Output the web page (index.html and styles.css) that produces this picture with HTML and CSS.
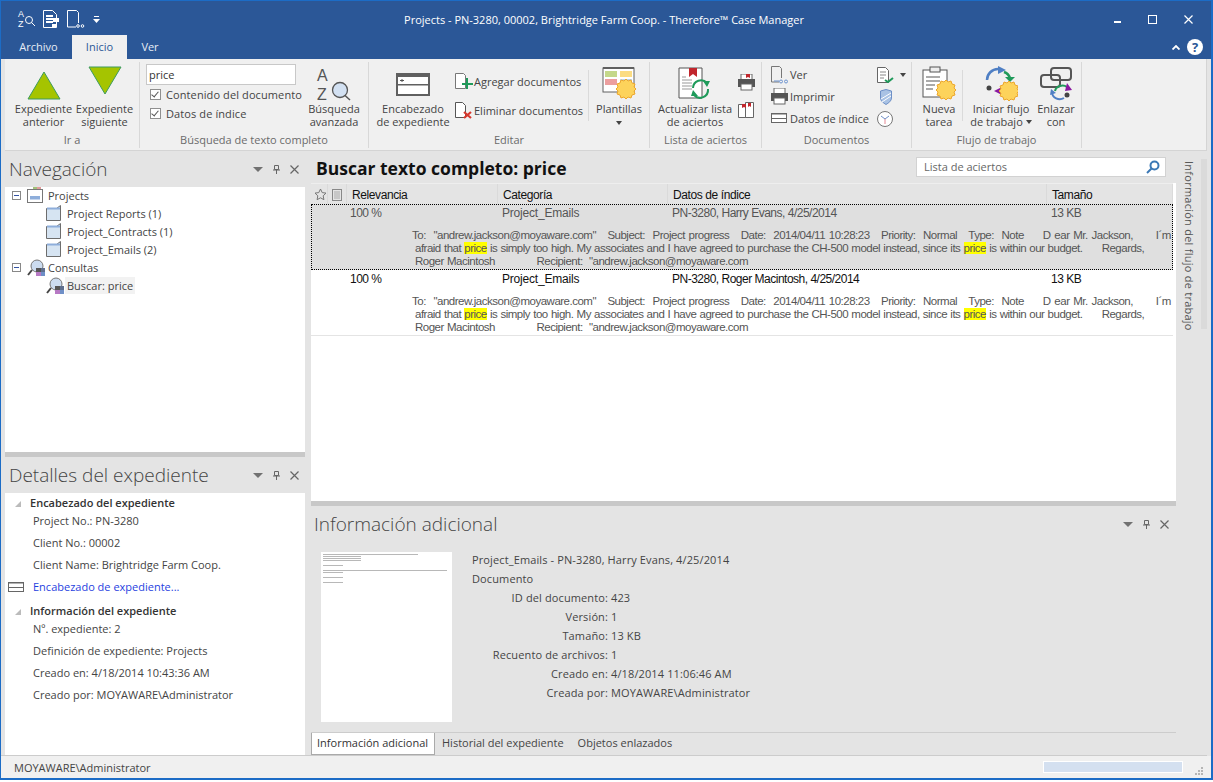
FILE: index.html
```html
<!DOCTYPE html>
<html lang="es">
<head>
    <meta charset="UTF-8">
    <title>Projects - Therefore Case Manager</title>
    <link rel="stylesheet" href="styles.css">
</head>
<body>
<svg class="defs" width="0" height="0">
    <defs>
        <g id="sun">
            <path d="M10 0l2 2 3-1 1 3 3 1-1 3 2 2-2 2 1 3-3 1-1 3-3-1-2 2-2-2-3 1-1-3-3-1 1-3-2-2 2-2-1-3 3-1 1-3 3 1z" fill="#fdd35b" stroke="#eda72c"/>
        </g>
        <g id="folder">
            <path d="M.5 15.500v-12h10l4-3v15z" fill="#d6e4f2" stroke="#6d6d6d"/>
            <path d="M1 3.500h13" stroke="#8eaedb" stroke-width="2"/>
        </g>
        <g id="query">
            <circle cx="10" cy="7" r="6" fill="#ccdcf0" stroke="#777"/>
            <path d="M5 11l-4 5" stroke="#444" stroke-width="2"/>
            <rect x="9" y="9" width="5" height="4" fill="#555"/>
            <rect x="9" y="13" width="5" height="4" fill="#b779c4"/>
            <rect x="14" y="9" width="4" height="4" fill="#5f6f8e"/>
            <rect x="14" y="13" width="4" height="4" fill="#6f8fc7"/>
        </g>
        <g id="pane">
            <path d="M0 0h10l-5 5z" fill="#717171"/>
        </g>
    </defs>
</svg>
<div class="window">
    <header class="titlebar">
        <div class="quick">
            <div class="az az-small"><span>A</span><span>Z</span><svg width="18" height="20" viewBox="0 0 18 20" fill="none" stroke="#fff"><circle cx="11" cy="11" r="3.500"/><path d="M13.500 13.500l3.500 3.500"/></svg></div>
            <svg width="17" height="18" viewBox="0 0 17 18"><path d="M.5.500h9l4 4v13H.5z" fill="none" stroke="#fff"/><path d="M3 6h7M3 9h7M3 12h7" stroke="#fff" stroke-width="2"/><path d="M10 8h6v4h-6zM9 14h5v3H9z" fill="#fff"/></svg>
            <svg width="18" height="18" viewBox="0 0 18 18" fill="none" stroke="#fff"><path d="M9 17H.5V.5h9l2 2V13"/><circle cx="11" cy="16" r="1.300"/><circle cx="15.500" cy="16" r="1.300"/></svg>
            <svg class="quick-more" width="7" height="7" viewBox="0 0 7 7"><path d="M1 0h5v1H1zM0 3h7L3.500 7z" fill="#fff"/></svg>
        </div>
        <div class="title">Projects - PN-3280, 00002, Brightridge Farm Coop. - Therefore™ Case Manager</div>
        <div class="winbtns">
            <svg width="7" height="3" viewBox="0 0 7 3" class="win-min"><rect width="7" height="2" y="1" fill="#fff"/></svg>
            <svg width="9" height="9" viewBox="0 0 9 9"><rect x=".5" y=".5" width="8" height="8" fill="none" stroke="#fff"/></svg>
            <svg width="9" height="9" viewBox="0 0 9 9"><path d="M.5.500l8 8M8.500.500l-8 8" stroke="#fff" stroke-width="1.200"/></svg>
        </div>
    </header>

    <nav class="tabs">
        <a class="tab">Archivo</a>
        <a class="tab active">Inicio</a>
        <a class="tab">Ver</a>
        <div class="tabs-end">
            <svg width="8" height="5" viewBox="0 0 8 5"><path d="M.5 4.500L4 1l3.500 3.500" fill="none" stroke="#fff" stroke-width="1.800"/></svg>
            <span class="help">?</span>
        </div>
    </nav>

    <section class="ribbon">
        <div class="group g-ira">
            <div class="group-body">
                <div class="big w61">
                    <svg class="ico" width="34" height="35" viewBox="0 0 34 35"><path d="M17 6l16 27H1z" fill="#a5c400" stroke="#3d9b5e"/></svg>
                    <span>Expediente<br>anterior</span>
                </div>
                <div class="big w61">
                    <svg class="ico" width="34" height="35" viewBox="0 0 34 35"><path d="M1 1h32L17 28z" fill="#a5c400" stroke="#3d9b5e"/></svg>
                    <span>Expediente<br>siguiente</span>
                </div>
            </div>
            <div class="group-label">Ir a</div>
        </div>

        <div class="group g-search">
            <div class="group-body">
                <div class="search-col">
                    <div class="search-input">price</div>
                    <div class="check"><span class="box"></span>Contenido del documento</div>
                    <div class="check"><span class="box"></span>Datos de índice</div>
                </div>
                <div class="big w60">
                    <div class="ico az az-big"><span>A</span><span>Z</span><svg width="34" height="35" viewBox="0 0 34 35"><circle cx="23" cy="24" r="7.500" fill="#d3e1f2" stroke="#555" stroke-width="1.300"/><path d="M28 29.500l5 4.500" stroke="#555" stroke-width="1.500"/></svg></div>
                    <span>Búsqueda<br>avanzada</span>
                </div>
            </div>
            <div class="group-label">Búsqueda de texto completo</div>
        </div>

        <div class="group g-edit">
            <div class="group-body">
                <div class="big w80">
                    <svg class="ico" width="34" height="35" viewBox="0 0 34 35"><rect x="1" y="8" width="32" height="21" fill="#fff" stroke="#606060" stroke-width="2"/><path d="M0 7h34v4H0zM0 18h34v1.500H0z" fill="#606060"/><path d="M4 14.500h4M6 13v3" stroke="#555"/></svg>
                    <span>Encabezado<br>de expediente</span>
                </div>
                <div class="stack w130">
                    <div class="small"><svg width="18" height="17" viewBox="0 0 18 17"><path d="M.5.500h8l2 2v13H.5z" fill="#fff" stroke="#777"/><path d="M12 5v11M7 11h11" stroke="#1f9a5a" stroke-width="2"/></svg>Agregar documentos</div>
                    <div class="small"><svg width="18" height="17" viewBox="0 0 18 17"><path d="M.5.500h7l3 3v12H.5z" fill="#fff" stroke="#555"/><path d="M9 10l7 6M16 10l-7 6" stroke="#d8382e" stroke-width="2.200"/></svg>Eliminar documentos</div>
                </div>
                <div class="split s-plant"></div>
                <div class="big w56">
                    <svg class="ico" width="34" height="35" viewBox="0 -1 34 35"><rect x="1" y="1" width="31" height="24" fill="#fff" stroke="#606060"/><path d="M1 1h31" stroke="#606060" stroke-width="2"/><rect x="3" y="4" width="12" height="6" fill="#c5d88a"/><rect x="18" y="4" width="12" height="6" fill="#fbdc83"/><rect x="3" y="12" width="12" height="6" fill="#ec9f9f"/><rect x="18" y="12" width="12" height="6" fill="#bcd3ea"/><use href="#sun" x="14" y="12"/></svg>
                    <span>Plantillas</span>
                    <i class="caret"></i>
                </div>
            </div>
            <div class="group-label">Editar</div>
        </div>

        <div class="group g-list">
            <div class="group-body">
                <div class="big w80">
                    <svg class="ico" width="34" height="35" viewBox="0 -1 34 35"><path d="M1 1h23v30H1z" fill="#fff" stroke="#555"/><path d="M11 1h8v9l-4-3-4 3z" fill="#c1272d"/><path d="M4 10h4M4 13h10M4 16h10M4 19h10M4 22h10" stroke="#999"/><path d="M15 21a8 8 0 0 1 14-5M30 22a8 8 0 0 1-14 6" fill="none" stroke="#1e9a5a" stroke-width="2"/><path d="M25 14h7l-3 6zM20 29h-7l2-6z" fill="#1e9a5a"/></svg>
                    <span>Actualizar lista<br>de aciertos</span>
                </div>
                <div class="stack tools">
                    <svg width="17" height="17" viewBox="0 0 17 17"><rect x="3" y="0" width="11" height="6" fill="#fff" stroke="#666"/><path d="M8 0h4v4l-2-1-2 1z" fill="#c1272d"/><rect x="0" y="5" width="17" height="8" fill="#555"/><rect x="3" y="10" width="11" height="6" fill="#fff" stroke="#666"/></svg>
                    <svg width="17" height="17" viewBox="0 0 17 17"><path d="M.5 2.500h8v13h-8z" fill="#fff" stroke="#666"/><path d="M7.500.500h8v15h-8z" fill="#fff" stroke="#666"/><path d="M4 2h4v4l-2-1-2 1zM10 1h3v4l-1.500-1L10 5z" fill="#c1272d"/></svg>
                </div>
            </div>
            <div class="group-label">Lista de aciertos</div>
        </div>

        <div class="group g-docs">
            <div class="group-body">
                <div class="stack w106">
                    <div class="mini"><svg width="17" height="18" viewBox="0 0 17 18" fill="none"><path d="M8 16H.5V.5h8l2 2V12" stroke="#777"/><circle cx="10" cy="15.500" r="1.500" stroke="#6d93cf"/><circle cx="15" cy="15.500" r="1.500" stroke="#6d93cf"/><path d="M3 15h5" stroke="#6d93cf"/></svg>Ver</div>
                    <div class="mini"><svg width="17" height="17" viewBox="0 0 17 17"><rect x="3" y="0" width="11" height="6" fill="#fff" stroke="#666"/><rect x="0" y="5" width="17" height="8" fill="#555"/><rect x="3" y="10" width="11" height="6" fill="#fff" stroke="#666"/></svg>Imprimir</div>
                    <div class="mini"><svg width="17" height="11" viewBox="0 0 17 11"><rect x=".5" y=".5" width="15" height="9" fill="#fff" stroke="#666"/><path d="M0 1h16M0 5.500h16" stroke="#666"/></svg>Datos de índice</div>
                </div>
                <div class="stack tools2">
                    <div class="t-row"><svg width="18" height="16" viewBox="0 0 18 16"><path d="M.5.500h8l3 3v12H.5z" fill="#fff" stroke="#666"/><path d="M3 5h6M3 8h6M3 11h4" stroke="#888"/><path d="M8 13l3 2 5-4" fill="none" stroke="#1f9a5a" stroke-width="2"/></svg><i class="caret"></i></div>
                    <svg class="shield" width="12" height="16" viewBox="0 0 12 16"><path d="M.5 2L6 .5 11.500 2v7c0 3-3 5-5.500 6.500C3.500 14 .5 12 .5 9z" fill="#a9c2e4" stroke="#6d8fc6"/><path d="M1 10L11 4M2 13l9-6" stroke="#fff"/></svg>
                    <svg width="16" height="16" viewBox="0 0 16 16"><circle cx="8" cy="8" r="7.500" fill="#fff" stroke="#777"/><path d="M8 8V13" stroke="#e58a95"/><path d="M8 8L4 5M8 8l4-3" stroke="#6f8fc7"/></svg>
                </div>
            </div>
            <div class="group-label">Documentos</div>
        </div>

        <div class="group g-flow">
            <div class="group-body">
                <div class="big w44">
                    <svg class="ico" width="34" height="35" viewBox="0 -1 34 35"><rect x="1" y="3" width="24" height="27" fill="#fff" stroke="#555"/><rect x="8" y="0" width="10" height="5" fill="#eee" stroke="#555"/><path d="M4 10h14M4 14h14M4 18h9M4 22h7" stroke="#aaa" stroke-width="2"/><use href="#sun" x="14" y="13"/></svg>
                    <span>Nueva<br>tarea</span>
                </div>
                <div class="split s-flow"></div>
                <div class="big w66">
                    <svg class="ico" width="34" height="35" viewBox="0 0 34 35" fill="none"><path d="M3 14C3 8 8 3 14 3" stroke="#4f7fc4" stroke-width="2.500"/><path d="M14 0l8 4-8 4z" fill="#4f7fc4"/><path d="M20 6c3 1 5 3 6 6" stroke="#1f9a5a" stroke-width="2.500"/><path d="M21 11h10l-5 5z" fill="#1f9a5a"/><circle cx="5" cy="22" r="2.500" fill="#444"/><path d="M10 25l8-4v8z" fill="#8a1aa0"/><use href="#sun" x="15" y="15"/></svg>
                    <span>Iniciar flujo<br>de trabajo<i class="caret inline"></i></span>
                </div>
                <div class="big w44">
                    <svg class="ico" width="34" height="35" viewBox="0 0 34 35" fill="none"><rect x="12" y="2" width="20" height="12" rx="3" stroke="#555" stroke-width="2"/><rect x="2" y="9" width="19" height="12" rx="3" stroke="#555" stroke-width="2"/><path d="M16 25c1-5 8-7 12-4" stroke="#1f9a5a" stroke-width="2"/><path d="M28 17l5 7-7 1z" fill="#8a1aa0"/><path d="M13 26c0 6 7 9 12 6" stroke="#4f7fc4" stroke-width="2"/><path d="M12 23l5 4-6 2z" fill="#4f7fc4"/><circle cx="28" cy="29" r="2.500" fill="#444"/></svg>
                    <span>Enlazar<br>con</span>
                </div>
            </div>
            <div class="group-label">Flujo de trabajo</div>
        </div>
    </section>

    <main class="workspace">
        <aside class="left">
            <div class="pane nav-pane">
                <div class="pane-head">
                    <h2>Navegación</h2>
                    <div class="pane-ctl"><svg width="10" height="5"><use href="#pane"/></svg><svg width="7" height="9" viewBox="0 0 7 9"><path d="M1.500.500h4v4h-4zM0 5h7M3.500 5v4" fill="none" stroke="#666"/></svg><svg width="9" height="9" viewBox="0 0 9 9"><path d="M.5.500l8 8M8.500.500l-8 8" stroke="#666" stroke-width="1.200"/></svg></div>
                </div>
                <ul class="tree">
                    <li><i class="toggle"></i><svg width="16" height="16" viewBox="0 0 16 16"><rect x=".5" y="2.500" width="15" height="13" fill="#fff" stroke="#777"/><rect x="3" y="9" width="10" height="3.500" fill="#8eaedb"/><path d="M6 1h4" stroke="#a3c27a" stroke-width="2"/><path d="M10 1h4" stroke="#e39b9b" stroke-width="2"/></svg><span>Projects</span></li>
                    <li class="child"><svg width="16" height="16"><use href="#folder"/></svg><span>Project Reports (1)</span></li>
                    <li class="child"><svg width="16" height="16"><use href="#folder"/></svg><span>Project_Contracts (1)</span></li>
                    <li class="child"><svg width="16" height="16"><use href="#folder"/></svg><span>Project_Emails (2)</span></li>
                    <li><i class="toggle"></i><svg width="18" height="17" viewBox="0 0 18 17"><use href="#query"/></svg><span>Consultas</span></li>
                    <li class="child"><svg width="18" height="17" viewBox="0 0 18 17"><use href="#query"/></svg><span class="current">Buscar: price</span></li>
                </ul>
            </div>
            <div class="splitter"></div>
            <div class="pane details-pane">
                <div class="pane-head">
                    <h2>Detalles del expediente</h2>
                    <div class="pane-ctl"><svg width="10" height="5"><use href="#pane"/></svg><svg width="7" height="9" viewBox="0 0 7 9"><path d="M1.500.500h4v4h-4zM0 5h7M3.500 5v4" fill="none" stroke="#666"/></svg><svg width="9" height="9" viewBox="0 0 9 9"><path d="M.5.500l8 8M8.500.500l-8 8" stroke="#666" stroke-width="1.200"/></svg></div>
                </div>
                <div class="details">
                    <div class="sect"><i class="tri"></i>Encabezado del expediente</div>
                    <div class="prop">Project No.: PN-3280</div>
                    <div class="prop">Client No.: 00002</div>
                    <div class="prop">Client Name: Brightridge Farm Coop.</div>
                    <div class="prop link"><svg width="16" height="10" viewBox="0 0 16 10"><rect x=".5" y=".5" width="15" height="9" fill="#fff" stroke="#666"/><path d="M0 1h16M0 5.500h16" stroke="#666"/></svg>Encabezado de expediente...</div>
                    <div class="sect s2"><i class="tri"></i>Información del expediente</div>
                    <div class="prop">Nº. expediente: 2</div>
                    <div class="prop">Definición de expediente: Projects</div>
                    <div class="prop">Creado en: 4/18/2014 10:43:36 AM</div>
                    <div class="prop">Creado por: MOYAWARE\Administrator</div>
                </div>
            </div>
        </aside>

        <section class="center">
            <div class="results-head">
                <h1>Buscar texto completo: price</h1>
                <div class="filter">Lista de aciertos
                    <svg width="14" height="14" viewBox="0 0 14 14" fill="none" stroke="#3b78b5" stroke-width="2"><circle cx="8.500" cy="5.500" r="4"/><path d="M5.500 8.500L1 13"/></svg>
                </div>
            </div>
            <div class="results">
                <div class="grid-head">
                    <div class="c-ico"><svg width="13" height="13" viewBox="0 0 13 13"><path d="M6.500 1l1.700 3.600 3.800.5-2.800 2.700.7 3.900-3.400-1.900-3.400 1.900.7-3.900L1 5.100l3.800-.5z" fill="none" stroke="#777"/></svg></div>
                    <div class="c-ico2"><svg width="10" height="12" viewBox="0 0 10 12"><rect x=".5" y=".5" width="9" height="11" fill="none" stroke="#888"/><path d="M2 3h6M2 5h6M2 7h6M2 9h6" stroke="#aaa"/></svg></div>
                    <div class="c-rel">Relevancia</div>
                    <div class="c-cat">Categoría</div>
                    <div class="c-data">Datos de índice</div>
                    <div class="c-size">Tamaño</div>
                </div>
                <article class="hit selected">
                    <div class="hit-cells"><span>100 %</span><span>Project_Emails</span><span>PN-3280, Harry Evans, 4/25/2014</span><span>13 KB</span></div>
                    <div class="preview">
                        <div class="first">To:  "andrew.jackson@moyaware.com"   Subject:  Project progress   Date:  2014/04/11 10:28:23   Priority:  Normal   Type:  Note     D ear Mr. Jackson,      I´m</div>
                        <div>afraid that <mark>price</mark> is simply too high. My associates and I have agreed to purchase the CH-500 model instead, since its <mark>price</mark> is within our budget.      Regards,</div>
                        <div>Roger Macintosh             Recipient:  "andrew.jackson@moyaware.com</div>
                    </div>
                </article>
                <article class="hit">
                    <div class="hit-cells"><span>100 %</span><span>Project_Emails</span><span>PN-3280, Roger Macintosh, 4/25/2014</span><span>13 KB</span></div>
                    <div class="preview">
                        <div class="first">To:  "andrew.jackson@moyaware.com"   Subject:  Project progress   Date:  2014/04/11 10:28:23   Priority:  Normal   Type:  Note     D ear Mr. Jackson,      I´m</div>
                        <div>afraid that <mark>price</mark> is simply too high. My associates and I have agreed to purchase the CH-500 model instead, since its <mark>price</mark> is within our budget.      Regards,</div>
                        <div>Roger Macintosh             Recipient:  "andrew.jackson@moyaware.com</div>
                    </div>
                </article>
            </div>
            <div class="splitter"></div>
            <div class="info">
                <div class="info-head">
                    <h2>Información adicional</h2>
                    <div class="pane-ctl"><svg width="10" height="5"><use href="#pane"/></svg><svg width="7" height="9" viewBox="0 0 7 9"><path d="M1.500.500h4v4h-4zM0 5h7M3.500 5v4" fill="none" stroke="#666"/></svg><svg width="9" height="9" viewBox="0 0 9 9"><path d="M.5.500l8 8M8.500.500l-8 8" stroke="#666" stroke-width="1.200"/></svg></div>
                </div>
                <div class="info-body">
                    <div class="thumb">
                        <div class="t-lines"><b></b><b class="s"></b><b class="s"></b><b class="s"></b><i></i><b class="xs"></b><i></i><b class="f"></b><b class="xs"></b><i></i><b class="xs"></b><i></i><b class="xs"></b></div>
                    </div>
                    <div class="meta">
                        <div class="meta-line">Project_Emails - PN-3280, Harry Evans, 4/25/2014</div>
                        <div class="meta-line">Documento</div>
                        <dl>
                            <dt>ID del documento:</dt><dd>423</dd>
                            <dt>Versión:</dt><dd>1</dd>
                            <dt>Tamaño:</dt><dd>13 KB</dd>
                            <dt>Recuento de archivos:</dt><dd>1</dd>
                            <dt>Creado en:</dt><dd>4/18/2014 11:06:46 AM</dd>
                            <dt>Creada por:</dt><dd>MOYAWARE\Administrator</dd>
                        </dl>
                    </div>
                </div>
                <div class="info-tabs">
                    <a class="itab active">Información adicional</a>
                    <a class="itab">Historial del expediente</a>
                    <a class="itab">Objetos enlazados</a>
                </div>
            </div>
        </section>

        <aside class="side">
            <div class="side-label">Información del flujo de trabajo</div>
            <div class="side-track"></div>
        </aside>
    </main>

    <footer class="status">
        <span>MOYAWARE\Administrator</span>
        <div class="progress"></div>
        <svg class="grip" width="9" height="9" viewBox="0 0 9 9"><path d="M7 1h2v2H7zM7 4h2v2H7zM7 7h2v2H7zM4 4h2v2H4zM4 7h2v2H4zM1 7h2v2H1z" fill="#b5b5b5"/></svg>
    </footer>
</div>
</body>
</html>
```

FILE: styles.css
```css
html, body {
    margin: 0;
    padding: 0;
    height: 100%;
    overflow: hidden;
}

body {
    font-family: "Open Sans", "Noto Sans", sans-serif;
    font-size: 11px;
    color: #444;
    background: #fff;
}

.defs {
    display: block;
    height: 0;
}

.window {
    width: 1213px;
    height: 780px;
    display: flex;
    flex-direction: column;
    background: #e4e4e4;
    border: solid #1c6cc6;
    border-width: 1px 2px 2px 1px;
    box-sizing: border-box;
}

/* title bar */
.titlebar {
    height: 34px;
    flex: none;
    display: grid;
    grid-template-columns: 1fr auto 1fr;
    align-items: center;
    background: #2b5797;
    padding-top: 2px;
    box-sizing: border-box;
    color: #fff;
}

.quick {
    display: flex;
    align-items: center;
    gap: 7px;
    padding-left: 17px;
}

.quick-more {
    margin-left: 1px;
}

.az {
    position: relative;
    display: flex;
    flex-direction: column;
    text-align: left;
    font-family: "Liberation Sans", sans-serif;
}

.az svg {
    position: absolute;
    left: 0;
    top: 0;
}

.az-small {
    width: 18px;
    height: 21px;
    color: #fff;
    font-size: 9px;
    line-height: 10.500px;
}

.az-big {
    width: 34px;
    color: #555;
    font-size: 16px;
    line-height: 19px;
}

.title {
    font-size: 11px;
    color: #fff;
    padding-right: 4px;
}

.winbtns {
    display: flex;
    justify-content: flex-end;
    align-items: center;
    gap: 27px;
    padding-right: 18px;
}

.win-min {
    margin-top: 4px;
}

/* tabs */
.tabs {
    height: 24px;
    flex: none;
    display: flex;
    background: #2b5797;
    padding-left: 4px;
}

.tab {
    width: 67px;
    line-height: 24px;
    text-align: center;
    color: #e6ecf5;
    font-size: 11px;
}

.tab.active {
    width: 55px;
    background: #f0f0f0;
    color: #2b5797;
}

.tab:last-of-type {
    width: 46px;
}

.tabs-end {
    margin-left: auto;
    display: flex;
    align-items: center;
    gap: 7px;
    padding-right: 8px;
}

.help {
    width: 16px;
    height: 16px;
    border-radius: 50%;
    background: #fff;
    color: #2b5797;
    font-size: 13px;
    font-weight: 700;
    line-height: 16px;
    text-align: center;
}

/* ribbon */
.ribbon {
    height: 92px;
    flex: none;
    display: flex;
    margin-left: 4px;
    width: 1202px;
    box-sizing: border-box;
    background: #f0f0f0;
    border-bottom: 1px solid #d4d4d4;
    border-right: 1px solid #d4d4d4;
}

.group {
    display: flex;
    flex-direction: column;
    margin: 3px 0 2px;
    border-right: 1px solid #d8d8d8;
    box-sizing: border-box;
}

.g-ira { width: 135px; }
.g-search { width: 229px; }
.g-edit { width: 281px; }
.g-list { width: 112px; }
.g-docs { width: 150px; }
.g-flow { width: 170px; }

.group-body {
    flex: 1;
    display: flex;
    min-height: 0;
}

.g-ira .group-body { padding-left: 8px; }
.g-search .group-body { padding-left: 6px; }
.g-edit .group-body { padding-left: 4px; }
.g-list .group-body { padding-left: 5px; }
.g-docs .group-body { padding-left: 9px; }
.g-flow .group-body { padding-left: 5px; }

.group-label {
    height: 19px;
    text-align: center;
    color: #6b6b6b;
    font-size: 11px;
    line-height: 22px;
}

.big {
    display: flex;
    flex-direction: column;
    align-items: center;
    text-align: center;
    line-height: 13px;
    color: #444;
}

.big .ico {
    height: 35px;
    margin: 4px 0 1px;
    flex: none;
}

.big .az-big {
    height: 38px;
    margin-bottom: -2px;
}

.w61 { width: 61px; }
.w60 { width: 60px; }
.w80 { width: 80px; }
.w56 { width: 56px; }
.w44 { width: 44px; }
.w66 { width: 66px; }

.stack {
    display: flex;
    flex-direction: column;
}

.w130 {
    width: 130px;
    margin-left: 2px;
    padding-top: 9px;
    gap: 8px;
}

.small {
    display: flex;
    align-items: center;
    gap: 1px;
    height: 21px;
    white-space: nowrap;
}

.split {
    width: 1px;
    margin-top: 8px;
    margin-bottom: 8px;
    background: #dadada;
}

.s-plant {
    margin-left: 3px;
    margin-right: 2px;
}

.s-flow {
    margin-left: 1px;
    margin-right: 5px;
}

.caret {
    display: block;
    width: 0;
    height: 0;
    margin-top: 6px;
    border: 3px solid transparent;
    border-top: 4px solid #444;
    border-bottom: 0;
}

.caret.inline {
    display: inline-block;
    margin: 0 0 2px 3px;
}

.tools {
    width: 22px;
    padding-top: 12px;
    gap: 11px;
    align-items: center;
}

.w106 {
    width: 106px;
    padding-top: 3px;
    gap: 3px;
}

.mini {
    height: 19px;
    display: flex;
    align-items: center;
    gap: 2px;
    white-space: nowrap;
}

.tools2 {
    width: 30px;
    padding-top: 5px;
    gap: 6px;
    align-items: flex-start;
}

.shield {
    margin-left: 3px;
}

.t-row {
    display: flex;
    align-items: center;
    gap: 5px;
}

.t-row .caret {
    margin-top: 0;
}

/* full text group */
.search-col {
    width: 158px;
    padding-top: 2px;
}

.search-input {
    width: 150px;
    height: 21px;
    box-sizing: border-box;
    background: #fff;
    border: 1px solid #c8c8c8;
    padding-left: 2px;
    line-height: 19px;
    color: #333;
}

.check {
    display: flex;
    align-items: center;
    height: 19px;
    white-space: nowrap;
    color: #444;
    letter-spacing: 0.1px;
}

.box {
    width: 9px;
    height: 9px;
    margin: 0 5px 0 4px;
    background: #fff;
    border: 1px solid #8f8f8f;
    position: relative;
}

.box::after {
    content: "";
    position: absolute;
    left: 2px;
    top: 0;
    width: 3px;
    height: 6px;
    border: solid #555;
    border-width: 0 1px 1px 0;
    transform: rotate(40deg);
}

/* workspace */
.workspace {
    flex: 1;
    min-height: 0;
    display: flex;
    padding-left: 4px;
    width: 1206px;
    box-sizing: border-box;
    border-bottom: 1px solid #ccc;
}

.left {
    width: 300px;
    flex: none;
    display: flex;
    flex-direction: column;
}

.pane {
    display: flex;
    flex-direction: column;
}

.nav-pane {
    height: 301px;
}

.details-pane {
    flex: 1;
    min-height: 0;
}

.pane-head {
    flex: none;
    height: 36px;
    display: flex;
    align-items: center;
    justify-content: space-between;
    padding: 0 6px 0 4px;
}

.pane-head h2, .info-head h2 {
    margin: 0;
    font-family: "Open Sans", "Noto Sans", sans-serif;
    font-weight: 300;
    font-size: 19px;
    color: #444;
}

.pane-ctl {
    display: flex;
    align-items: center;
    gap: 10px;
}

.tree {
    flex: 1;
    margin: 0;
    padding: 0;
    list-style: none;
    background: #fff;
}

.tree li {
    height: 18px;
    display: grid;
    grid-template-columns: 15px 21px 1fr;
    align-items: center;
    padding-left: 7px;
    white-space: nowrap;
}

.tree li:first-child {
    margin-top: -1px;
}

.tree li.child {
    padding-left: 41px;
    grid-template-columns: 21px 1fr;
}

.toggle {
    width: 7px;
    height: 7px;
    border: 1px solid #888;
    position: relative;
    background: #fff;
}

.toggle::after {
    content: "";
    position: absolute;
    left: 1px;
    top: 3px;
    width: 5px;
    height: 1px;
    background: #3554a4;
}

.current {
    background: #f2f2f2;
    padding: 1px 2px;
    margin-left: -2px;
    justify-self: start;
}

.splitter {
    height: 5px;
    flex: none;
    background: #c8c8c8;
}

.details {
    flex: 1;
    background: #fff;
    padding-top: 3px;
}

.sect {
    height: 14px;
    line-height: 14px;
    font-weight: 600;
    color: #333;
    padding-left: 25px;
    position: relative;
}

.tri {
    position: absolute;
    left: 10px;
    top: 5px;
    width: 0;
    height: 0;
    border-style: solid;
    border-width: 0 0 6px 6px;
    border-color: transparent transparent #bbb transparent;
}

.prop {
    height: 22px;
    line-height: 22px;
    padding-left: 28px;
    color: #444;
    white-space: nowrap;
    position: relative;
}

.s2 {
    margin-top: 6px;
}

.link {
    color: #1f3fe0;
}

.link svg {
    position: absolute;
    left: 3px;
    top: 6px;
}

/* results */
.center {
    width: 865px;
    margin-left: 6px;
    flex: none;
    display: flex;
    flex-direction: column;
}

.results-head {
    height: 32px;
    flex: none;
    display: flex;
    align-items: center;
    justify-content: space-between;
    padding: 0 10px 0 5px;
    box-sizing: border-box;
}

.results-head h1 {
    margin: 2px 0 0;
    font-size: 17.500px;
    font-weight: 700;
    color: #111;
}

.filter {
    width: 250px;
    height: 20px;
    box-sizing: border-box;
    background: #fff;
    border: 1px solid #d2d2d2;
    display: flex;
    align-items: center;
    justify-content: space-between;
    padding: 0 5px 1px 7px;
    color: #666;
}

.results {
    height: 318px;
    flex: none;
    background: #fff;
    font-family: "Liberation Sans", sans-serif;
    font-size: 12px;
    color: #555;
}

.grid-head {
    height: 21px;
    width: 862px;
    box-sizing: border-box;
    background: #e4e4e4;
    border-top: 1px solid #eee;
    display: grid;
    grid-template-columns: 17px 19px 151px 170px 379px 126px;
    align-items: center;
    color: #111;
    letter-spacing: -0.4px;
}

.grid-head > div {
    height: 100%;
    display: flex;
    align-items: center;
    border-right: 1px solid #dadada;
    padding: 1px 0 0 5px;
    box-sizing: border-box;
}

.grid-head > .c-ico {
    padding-left: 3px;
}

.grid-head > .c-ico2 {
    padding-left: 4px;
}

.hit {
    width: 862px;
    height: 66px;
    box-sizing: border-box;
    border-bottom: 1px solid #e4e4e4;
    color: #111;
}

.hit.selected {
    background: #dfdfdf;
    outline: 1px dotted #000;
    outline-offset: -1px;
    color: #555;
    border-bottom: 0;
}

.hit-cells {
    display: grid;
    grid-template-columns: 152px 170px 379px 100px;
    height: 18px;
    line-height: 17px;
    padding: 1px 0 0 39px;
    box-sizing: border-box;
    letter-spacing: -0.5px;
}

.hit-cells span {
    white-space: nowrap;
}

.hit-cells span:nth-child(2) {
    letter-spacing: -0.2px;
}

.preview {
    margin: 7px 0 0 104px;
    line-height: 13px;
    font-size: 11.500px;
    color: #555;
    word-spacing: 0.5px;
    letter-spacing: -0.5px;
}

.preview > div {
    white-space: pre;
}

.preview .first {
    margin-left: -3px;
    word-spacing: 1.100px;
}

mark {
    background: #ffff00;
    color: inherit;
}

/* additional info */
.info {
    flex: 1;
    min-height: 0;
    display: flex;
    flex-direction: column;
}

.info-head {
    height: 36px;
    flex: none;
    display: flex;
    align-items: center;
    justify-content: space-between;
    padding: 0 7px 0 3px;
}

.info-body {
    flex: 1;
    min-height: 0;
    display: flex;
    padding: 10px 0 0 10px;
}

.thumb {
    width: 131px;
    height: 170px;
    flex: none;
    background: #fff;
    box-sizing: border-box;
    padding: 2px;
}

.t-lines b, .t-lines i {
    display: block;
    height: 1px;
    margin-bottom: 1px;
    background: #b8b8b8;
    width: 75%;
}

.t-lines i {
    background: none;
    height: 2px;
}

.t-lines .s { width: 30%; }
.t-lines .f { width: 98%; }
.t-lines .xs { width: 16%; }

.meta {
    margin: -2px 0 0 20px;
    line-height: 19px;
    color: #444;
    letter-spacing: 0.12px;
}

.meta dl {
    margin: 0;
    display: grid;
    grid-template-columns: 136px auto;
    column-gap: 3px;
}

.meta dt {
    text-align: right;
    white-space: nowrap;
}

.meta dd {
    margin: 0;
    white-space: nowrap;
}

.info-tabs {
    height: 22px;
    flex: none;
    display: flex;
    border-top: 1px solid #ccc;
}

.itab {
    line-height: 20px;
    padding: 0 7px;
    white-space: nowrap;
}

.itab.active {
    background: #fff;
    width: 124px;
    box-sizing: border-box;
    padding: 0 5px;
    border: 1px solid #aaa;
    border-top: 0;
    color: #333;
}

/* right strip */
.side {
    flex: 1;
    position: relative;
}

.side-label {
    writing-mode: vertical-rl;
    height: 170px;
    margin: 10px 0 0 6px;
    color: #555;
    white-space: nowrap;
    letter-spacing: 0.25px;
}

.side-track {
    position: absolute;
    left: 25px;
    top: 8px;
    width: 6px;
    height: 170px;
    background: #dadada;
}

/* status */
.status {
    height: 22px;
    flex: none;
    display: flex;
    align-items: center;
    padding: 0 8px 0 13px;
    background: #f0f0f0;
}

.progress {
    margin-left: auto;
    margin-right: 11px;
    width: 140px;
    height: 12px;
    box-sizing: border-box;
    background: #d4e0f0;
    border: 1px solid #fff;
}

.grip {
    margin-top: 6px;
}
```
